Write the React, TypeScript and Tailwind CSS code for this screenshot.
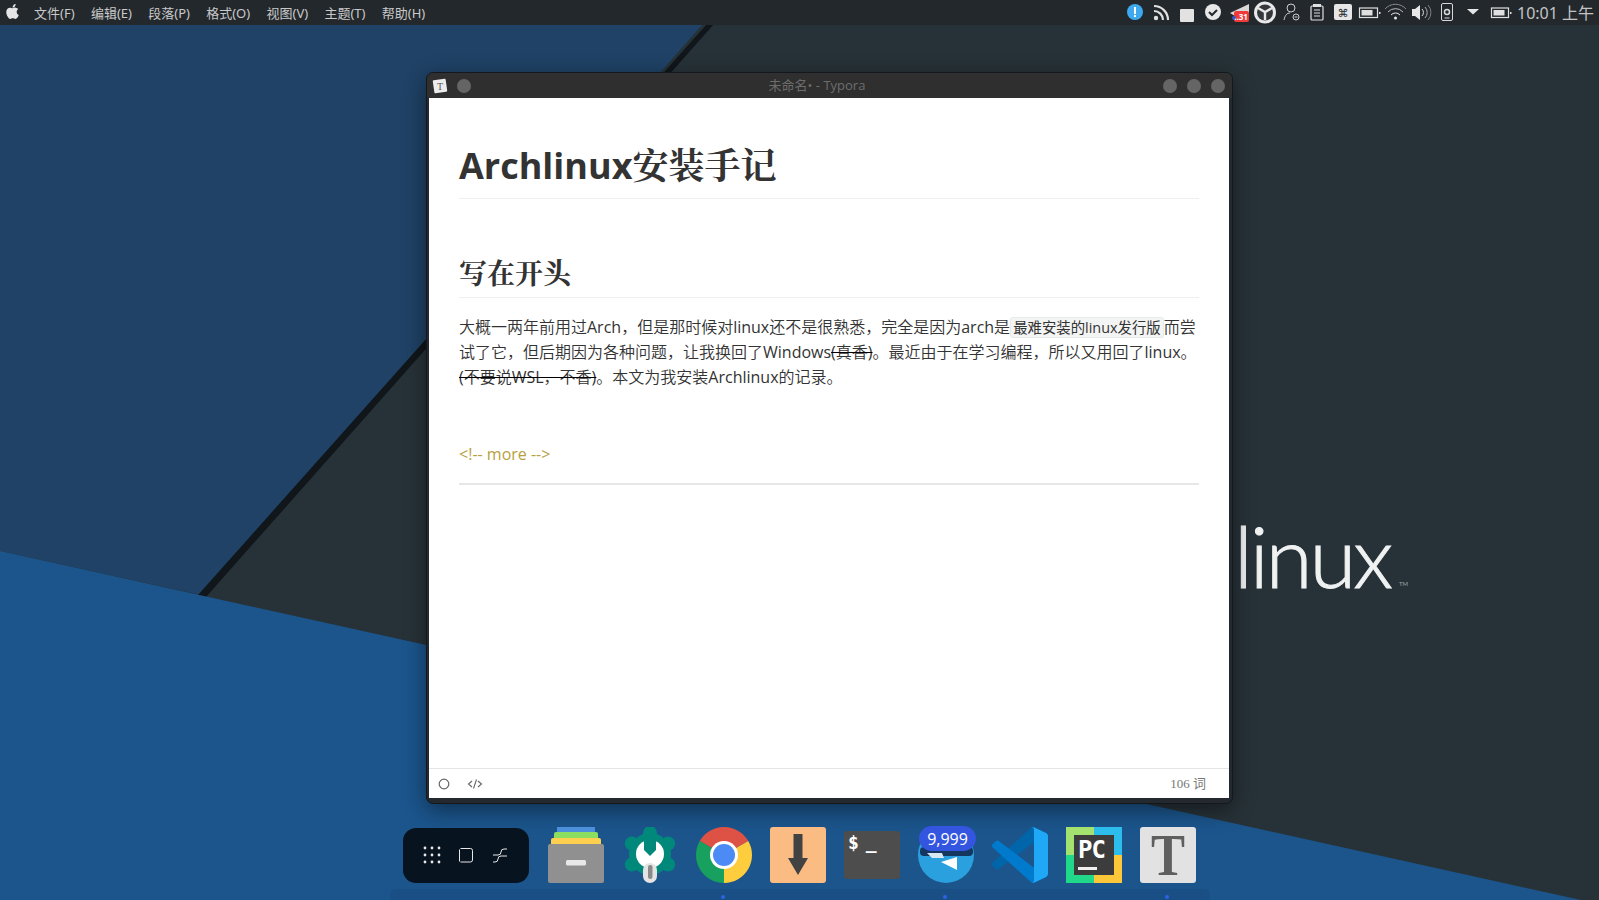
import { FaApple } from "react-icons/fa";

function Wallpaper() {
  return (
    <svg className="absolute inset-0" width="1599" height="900" viewBox="0 0 1599 900">
      <rect width="1599" height="900" fill="#273238" />
      <polygon points="0,0 724,0 201,595 0,551" fill="#1f4266" />
      <polygon points="707,24 714,24 206,597 198,595" fill="#10161a" />
      <polygon points="0,551 1599,904 0,904" fill="#1b558c" />
    </svg>
  );
}

const menus = [
  ["文件", "(F)"],
  ["编辑", "(E)"],
  ["段落", "(P)"],
  ["格式", "(O)"],
  ["视图", "(V)"],
  ["主题", "(T)"],
  ["帮助", "(H)"],
];

function TrayIcons() {
  return (
    <svg width="390" height="25" viewBox="0 0 390 25" className="shrink-0">
      <circle cx="13" cy="12" r="8" fill="#3fa9f0" />
      <rect x="12" y="7" width="2" height="7" fill="#fff" />
      <rect x="12" y="15" width="2" height="2" fill="#fff" />
      <g fill="none" stroke="#e0e0e0" strokeWidth="2.2">
        <path d="M32 6a14 14 0 0 1 14 14" />
        <path d="M32 11a9 9 0 0 1 9 9" />
      </g>
      <circle cx="34" cy="18" r="2.2" fill="#e0e0e0" />
      <rect x="58" y="9" width="14" height="13" rx="1" fill="#e2e2e2" />
      <circle cx="91" cy="12" r="8" fill="#e8e8e8" />
      <path d="M87 12l3 3 5-5" fill="none" stroke="#22282e" strokeWidth="2" />
      <path d="M108 13l19-9v12h-14z" fill="#d8d8d8" />
      <rect x="112" y="11" width="15" height="11" rx="2" fill="#f03a3a" />
      <circle cx="112" cy="18" r="2" fill="#3355cc" />
      <text x="119" y="20" fontSize="8" fontWeight="700" fill="#fff" textAnchor="middle" fontFamily="Open Sans">..31</text>
      <circle cx="143" cy="12.500" r="11" fill="#e8e8e8" />
      <circle cx="143" cy="12.500" r="8" fill="#34383c" />
      <path d="M136 8l7 4 7-4M143 12v8" stroke="#e8e8e8" strokeWidth="2.4" fill="none" />
      <g fill="none" stroke="#cfcfcf" strokeWidth="1">
        <circle cx="169" cy="8" r="4" />
        <path d="M162 20c1-5 3-7 6-7" />
        <circle cx="174" cy="17" r="3" />
        <path d="M172.500 17h3" />
      </g>
      <g fill="none" stroke="#e0e0e0" strokeWidth="1.2">
        <rect x="189" y="6" width="12" height="14" rx="1" />
        <path d="M192 10h6M192 13h6M192 16h6" />
      </g>
      <rect x="191" y="4" width="8" height="3" fill="#e0e0e0" />
      <rect x="212" y="4" width="18" height="16" rx="2" fill="#e6e6e6" />
      <text x="221" y="16.500" fontSize="11" fill="#22282e" textAnchor="middle" fontFamily="DejaVu Sans">⌘</text>
      <rect x="237.500" y="8" width="18" height="9.500" fill="none" stroke="#e0e0e0" strokeWidth="1.2" />
      <rect x="239.500" y="10" width="11" height="5.500" fill="#e0e0e0" />
      <rect x="257" y="12" width="1.500" height="2" fill="#e0e0e0" />
      <g fill="none" stroke="#8a8a8a" strokeWidth="1">
        <path d="M263 9a14 14 0 0 1 21 0" />
        <path d="M266 12a10 10 0 0 1 15 0" stroke="#bdbdbd" />
        <path d="M269 15a6 6 0 0 1 9 0" stroke="#e8e8e8" />
      </g>
      <circle cx="273.500" cy="18" r="1.500" fill="#e8e8e8" />
      <path d="M290 9h3l5-4v15l-5-4h-3z" fill="#e8e8e8" />
      <g fill="none" strokeWidth="1">
        <path d="M300 9a5 5 0 0 1 0 7" stroke="#e0e0e0" />
        <path d="M303 7a8 8 0 0 1 0 11" stroke="#b0b0b0" />
        <path d="M306 5a11 11 0 0 1 0 15" stroke="#808080" />
      </g>
      <rect x="319.500" y="3.500" width="11" height="17" rx="1.500" fill="none" stroke="#d8d8d8" />
      <circle cx="325" cy="12" r="2.500" fill="none" stroke="#d8d8d8" strokeWidth="1.500" />
      <path d="M322.500 18h5" stroke="#d8d8d8" />
      <path d="M345 9h12l-6 5.500z" fill="#e6e6e6" />
      <rect x="369.500" y="8" width="17" height="9.500" fill="none" stroke="#e0e0e0" strokeWidth="1.2" />
      <rect x="371.500" y="10" width="11" height="5.500" fill="#e0e0e0" />
      <rect x="388" y="12" width="1.500" height="2" fill="#e0e0e0" />
    </svg>
  );
}

function Topbar() {
  return (
    <div className="relative flex h-[25px] shrink-0 items-center bg-[#23282d] font-['Noto_Sans','Noto_Sans_CJK_SC',sans-serif] text-[#c9c9c9]">
      <FaApple className="ml-[4px] mt-[-2px] h-[17px] w-[17px] text-[#e6e6e6]" />
      <div className="ml-[13px] mt-[2px] flex items-center">
        {menus.map(([a, b]) => (
          <span key={a} className="mr-[16.300px] whitespace-nowrap text-[13px]">
            {a}
            <span className="text-[13px]">{b}</span>
          </span>
        ))}
      </div>
      <div className="ml-auto flex items-center">
        <TrayIcons />
        <span className="ml-[5px] w-[82px] whitespace-nowrap text-[16px] text-[#c4c4c4]">10:01 上午</span>
      </div>
    </div>
  );
}

function TyporaMini() {
  return (
    <svg width="16" height="16" viewBox="0 0 16 16" className="shrink-0">
      <rect x="1.500" y="1.500" width="13" height="13" rx="1" fill="#ececec" transform="rotate(-8 8 8)" />
      <text x="8" y="12" fontSize="10" textAnchor="middle" fill="#555" fontFamily="Liberation Serif">T</text>
    </svg>
  );
}

function Dot() {
  return <span className="h-[14px] w-[14px] rounded-full bg-[#656565]" />;
}

function Editor() {
  return (
    <div className="ml-[426px] mt-[47px] flex h-[732px] w-[807px] shrink-0 flex-col rounded-[7px] border border-[#14181c] bg-[#23292f] pb-[5px] pl-[2px] pr-[3px] shadow-[0_6px_22px_rgba(0,0,0,0.45)]">
      <div className="relative -ml-[2px] -mr-[3px] flex h-[25px] shrink-0 items-center rounded-t-[6px] bg-[#2f2f2f] pl-[2px] pr-[3px]">
        <span className="ml-[3px]"><TyporaMini /></span>
        <span className="ml-[9px] flex"><Dot /></span>
        <span className="absolute left-0 right-[25px] text-center font-['Open_Sans','Noto_Sans_CJK_SC',sans-serif] text-[13px] text-[#6d6d6d]">
          未命名• - Typora
        </span>
        <span className="ml-auto mr-[4px] flex gap-[10px]">
          <Dot />
          <Dot />
          <Dot />
        </span>
      </div>
      <div className="flex min-h-0 flex-1 flex-col bg-white">
        <div className="flex-1 px-[30px] font-['Open_Sans','Noto_Sans_CJK_SC_DemiLight','Noto_Sans_CJK_SC',sans-serif] text-[16px] leading-[25px] text-[#333]">
          <h1 className="mt-[46px] border-b border-[#eeeeee] pb-[11px] font-['Open_Sans','Noto_Serif_CJK_SC','Noto_Sans_CJK_SC',sans-serif] text-[36px] font-bold leading-[43px]">
            Archlinux安装手记
          </h1>
          <h2 className="mt-[57px] border-b border-[#eeeeee] pb-[7px] font-['Open_Sans','Noto_Serif_CJK_SC','Noto_Sans_CJK_SC',sans-serif] text-[28px] font-bold leading-[34px]">
            写在开头
          </h2>
          <p className="mt-[17px]">
            大概一两年前用过Arch，但是那时候对linux还不是很熟悉，完全是因为arch是
            <code className="rounded-[3px] border border-[#e7eaed] bg-[#f3f4f4] px-[2px] font-['Open_Sans','Noto_Sans_CJK_SC',sans-serif] text-[14.400px] leading-[20px] text-[#333]">最难安装的linux发行版</code>
            而尝试了它，但后期因为各种问题，让我换回了Windows<del className="decoration-black">(真香)</del>。最近由于在学习编程，所以又用回了linux。<del className="decoration-black">(不要说WSL，不香)</del>。本文为我安装Archlinux的记录。
          </p>
          <p className="mt-[52px] text-[#b8a040]">&lt;!-- more --&gt;</p>
          <div className="mt-[16px] h-[2px] bg-[#e7e7e7]" />
        </div>
        <div className="flex h-[30px] shrink-0 items-center border-t border-[#e5e5e5] pl-[9px] pr-[23px]">
          <svg width="12" height="12" viewBox="0 0 12 12" className="shrink-0">
            <circle cx="6" cy="6" r="4.800" fill="none" stroke="#666" strokeWidth="1.200" />
          </svg>
          <svg width="16" height="12" viewBox="0 0 16 12" className="ml-[17px] shrink-0">
            <path d="M5 3L1.500 6 5 9M11 3l3.500 3L11 9M9.500 1.500l-3 9" fill="none" stroke="#666" strokeWidth="1.100" />
          </svg>
          <span className="ml-auto font-['Liberation_Serif','Noto_Sans_CJK_SC',serif] text-[13px] text-[#777]">106 词</span>
        </div>
      </div>
    </div>
  );
}

function Launcher() {
  return (
    <div className="flex h-[55px] w-[126px] shrink-0 items-center justify-center rounded-[13px] bg-[#07131f]">
      <svg width="112" height="20" viewBox="0 0 112 20">
        <g fill="#e8e8e8">
          {[0, 1, 2].flatMap((r) =>
            [0, 1, 2].map((c) => <circle key={`${r}${c}`} cx={15 + c * 7} cy={3 + r * 7} r="1.400" />)
          )}
        </g>
        <path d="M50.500 3.500h10a2 2 0 0 1 2 2v9.500a2 2 0 0 1-2 2h-10" fill="none" stroke="#e8e8e8" strokeWidth="1" />
        <path d="M49.500 4.500v12" fill="none" stroke="#e8e8e8" strokeWidth="1" />
        <path d="M97 4h-3a3 3 0 0 0-3 3a3 3 0 0 1-3 3h-5M97 11h-6a3 3 0 0 0-3 3a3 3 0 0 1-3 3h-2" fill="none" stroke="#e8e8e8" strokeWidth="1" />
      </svg>
    </div>
  );
}

function FilesIcon() {
  return (
    <svg width="56" height="56" viewBox="0 0 56 56" className="shrink-0">
      <rect x="9" y="-1" width="38" height="8" rx="2" fill="#4c8fdb" />
      <rect x="6" y="5" width="44" height="8" rx="2" fill="#8bde60" />
      <rect x="3" y="11" width="50" height="8" rx="2" fill="#ffd04f" />
      <rect x="0" y="17" width="56" height="39" rx="2" fill="#909090" />
      <rect x="18" y="33" width="20" height="5.500" rx="1.500" fill="#e8e8e8" />
    </svg>
  );
}

function WrenchIcon() {
  const lobes = [0, 60, 120, 180, 240, 300];
  return (
    <svg width="56" height="56" viewBox="0 0 56 56" className="shrink-0">
      <g fill="#00897b">
        <circle cx="28" cy="27" r="21" />
        {lobes.map((a) => {
          const t = (a * Math.PI) / 180;
          return <circle key={a} cx={28 + 21 * Math.sin(t)} cy={27 - 21 * Math.cos(t)} r="7" />;
        })}
      </g>
      <circle cx="28" cy="27" r="14" fill="#fff" />
      <rect x="21" y="36" width="14" height="20" rx="7" fill="#e4e4e4" />
      <rect x="26" y="38" width="4.500" height="14" rx="2.200" fill="#8a8a8a" />
      <path d="M22 4h12v19l-6 6-6-6z" fill="#00897b" />
    </svg>
  );
}

function ChromeIcon() {
  return (
    <svg width="56" height="56" viewBox="0 0 56 56" className="shrink-0">
      <path d="M28 28L3.750 14A28 28 0 0 1 52.250 14z" fill="#de5145" />
      <path d="M28 28L52.250 14A28 28 0 0 1 28 56z" fill="#fecd3e" />
      <path d="M28 28L28 56A28 28 0 0 1 3.750 14z" fill="#17a05e" />
      <circle cx="28" cy="28" r="14" fill="#fff" />
      <circle cx="28" cy="28" r="11" fill="#4c8bf5" />
    </svg>
  );
}

function DownloadIcon() {
  return (
    <div className="flex h-14 w-14 shrink-0 items-center justify-center rounded-[3px] bg-[#fbbc84]">
      <svg width="20" height="42" viewBox="0 0 28 42" preserveAspectRatio="none">
        <path d="M7.700 0h12.600v24H28L14 41 0 24h7.700z" fill="#424242" />
      </svg>
    </div>
  );
}

function TerminalIcon() {
  return (
    <div className="mb-[4px] h-[48px] w-14 shrink-0 self-end rounded-[3px] bg-[#4d4d4d] pl-[4px] font-['DejaVu_Sans_Mono',monospace] text-[18px] font-bold leading-[24px] tracking-[-2px] text-white">
      $ _
    </div>
  );
}

function TelegramIcon() {
  return (
    <div className="relative h-14 w-14 shrink-0">
      <svg width="56" height="56" viewBox="0 0 56 56">
        <circle cx="28" cy="28" r="28" fill="#2aa0de" />
        <rect x="2" y="20" width="53" height="9" rx="4" fill="#15365f" />
        <path d="M9 26l15 0 2 5-12 0z" fill="#d8e8f3" />
        <path d="M23 35l16-5v13z" fill="#ffffff" />
      </svg>
      <span className="absolute left-[1px] top-[-1px] flex h-[25px] w-[57px] items-center justify-center rounded-full bg-[#3355e0] font-['Open_Sans',sans-serif] text-[16px] leading-none text-white">
        9,999
      </span>
    </div>
  );
}

function VsCodeIcon() {
  return (
    <svg width="56" height="56" viewBox="0 0 100 100" className="shrink-0">
      <path d="M96.4614 10.7962L75.8569 0.875542C73.4719 -0.272773 70.6217 0.211611 68.75 2.08333L1.29858 63.5832C-0.515693 65.2373 -0.513607 68.0937 1.30308 69.7452L6.81272 74.754C8.29793 76.1042 10.5347 76.2036 12.1338 74.9905L93.3609 13.3699C96.086 11.3026 100 13.2462 100 16.6667V16.4275C100 14.0265 98.6246 11.8378 96.4614 10.7962Z" fill="#0065A9" />
      <path d="M96.4614 89.2038L75.8569 99.1245C73.4719 100.273 70.6217 99.7884 68.75 97.9167L1.29858 36.4168C-0.515693 34.7627 -0.513607 31.9063 1.30308 30.2548L6.81272 25.246C8.29793 23.8958 10.5347 23.7964 12.1338 25.0095L93.3609 86.6301C96.086 88.6974 100 86.7538 100 83.3333V83.5725C100 85.9735 98.6246 88.1622 96.4614 89.2038Z" fill="#007ACC" />
      <path d="M75.8578 99.1263C73.4721 100.274 70.6219 99.7885 68.75 97.9166C71.0564 100.223 75 98.5895 75 95.3278V4.67213C75 1.41039 71.0564 -0.223106 68.75 2.08329C70.6219 0.211402 73.4721 -0.273666 75.8578 0.873633L96.4587 10.7807C98.6234 11.8217 100 14.0112 100 16.4132V83.5871C100 85.9891 98.6234 88.1786 96.4586 89.2196L75.8578 99.1263Z" fill="#1fa8f5" />
    </svg>
  );
}

function PyCharmIcon() {
  return (
    <svg width="56" height="56" viewBox="0 0 56 56" className="shrink-0">
      <rect x="0" y="0" width="28" height="28" fill="#a3e26f" />
      <rect x="28" y="0" width="28" height="28" fill="#2dbdec" />
      <rect x="0" y="28" width="28" height="28" fill="#21d789" />
      <rect x="28" y="28" width="28" height="28" fill="#fcc83a" />
      <rect x="8" y="8" width="40" height="40" fill="#3c3c3c" />
      <text x="12" y="31" fontSize="24" fontWeight="700" fill="#fff" fontFamily="DejaVu Sans Mono" textLength="28">PC</text>
      <rect x="12" y="40" width="19" height="3" fill="#f0f0f0" />
    </svg>
  );
}

function TyporaIcon() {
  return (
    <div className="flex h-14 w-14 shrink-0 items-center justify-center rounded-[3px] bg-[#e2e2e2] font-['Liberation_Serif',serif] text-[60px] font-bold leading-none text-[#5f5f5f]">
      <span className="inline-block scale-x-[0.85]">T</span>
    </div>
  );
}

function Dock() {
  return (
    <div className="ml-[403px] mt-[23px] flex shrink-0 items-center">
      <Launcher />
      <div className="ml-[19px] flex items-center gap-[18px]">
        <FilesIcon />
        <WrenchIcon />
        <ChromeIcon />
        <DownloadIcon />
        <TerminalIcon />
        <TelegramIcon />
        <VsCodeIcon />
        <PyCharmIcon />
        <TyporaIcon />
      </div>
    </div>
  );
}

function Tray() {
  return (
    <div className="ml-[390px] mt-[6px] flex h-[11px] w-[820px] shrink-0 rounded-t-[6px] bg-[#1a4f85] pt-[6px]">
      <span className="ml-[331px] h-[4px] w-[4px] rounded-full bg-[#2e62e6]" />
      <span className="ml-[218px] h-[4px] w-[4px] rounded-full bg-[#2e62e6]" />
      <span className="ml-[218px] h-[4px] w-[4px] rounded-full bg-[#2e62e6]" />
    </div>
  );
}

export default function App() {
  return (
    <div className="relative flex h-[900px] w-[1599px] flex-col overflow-hidden bg-[#273238]">
      <Wallpaper />
      <div className="absolute left-[1234px] top-[504px] font-['Lato',sans-serif] text-[85px] font-light leading-[102px] tracking-[-3px] text-[#f0f2f2] [-webkit-text-stroke:1px_#f0f2f2]">
        linux
        <span className="absolute left-[165px] top-[77px] text-[6px] leading-none tracking-normal [-webkit-text-stroke:0]">TM</span>
      </div>
      <div className="relative flex h-full flex-col">
        <Topbar />
        <Editor />
        <Dock />
        <Tray />
      </div>
    </div>
  );
}
